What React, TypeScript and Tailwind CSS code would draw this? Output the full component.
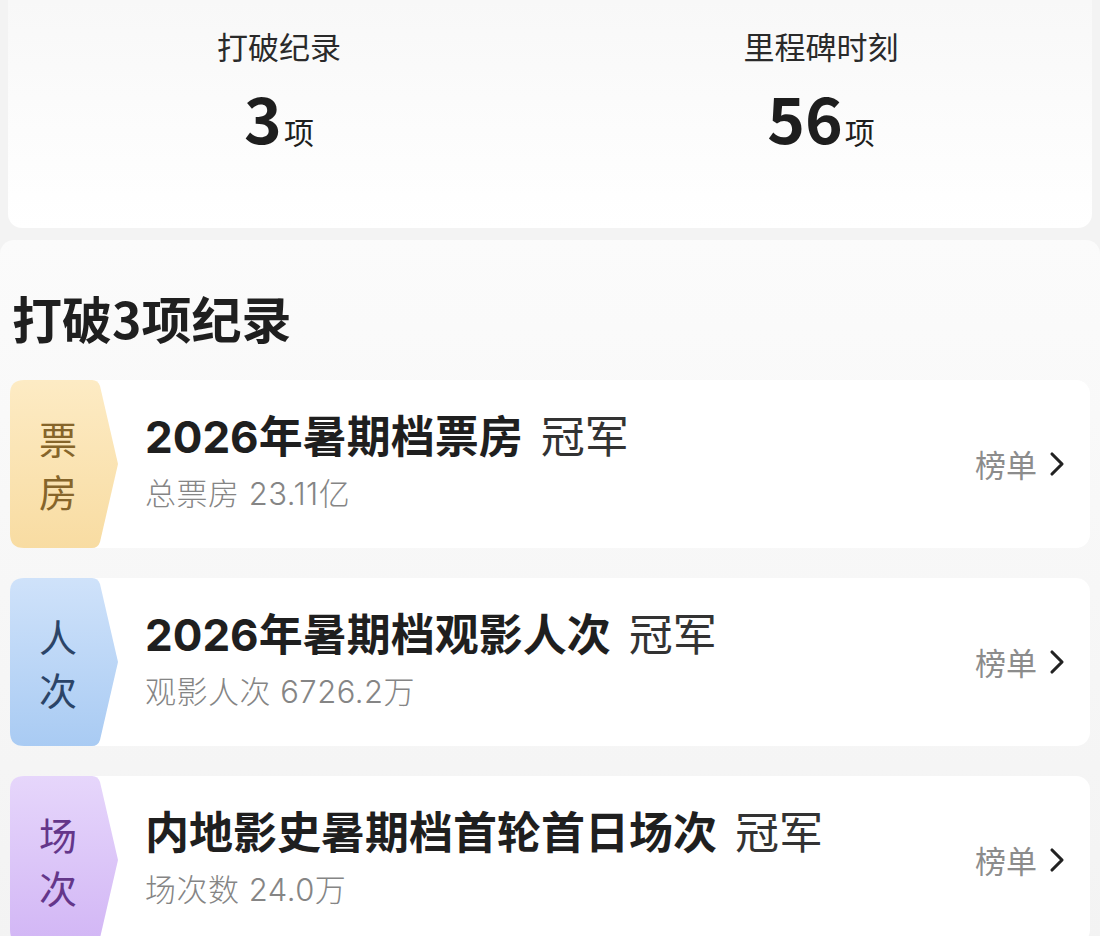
import { ChevronRight } from 'lucide-react';

interface RecordItem {
  badge: [string, string];
  title: string;
  value: string;
  from: string;
  to: string;
  ink: string;
  id: string;
}

const records: RecordItem[] = [
  {
    badge: ['票', '房'],
    title: '2026年暑期档票房',
    value: '总票房 23.11亿',
    from: '#fdebc4',
    to: '#f8dca2',
    ink: 'text-[#86652a]',
    id: 'g-box',
  },
  {
    badge: ['人', '次'],
    title: '2026年暑期档观影人次',
    value: '观影人次 6726.2万',
    from: '#cfe2fa',
    to: '#a9cbf3',
    ink: 'text-[#2b4467]',
    id: 'g-people',
  },
  {
    badge: ['场', '次'],
    title: '内地影史暑期档首轮首日场次',
    value: '场次数 24.0万',
    from: '#e6d6fb',
    to: '#d2b6f5',
    ink: 'text-[#64368a]',
    id: 'g-show',
  },
];

// latin glyphs from Inter (wider digits), CJK falls through
const mixed = { fontFamily: 'Inter, "Noto Sans CJK SC", sans-serif' };

function Badge({ item }: { item: RecordItem }) {
  return (
    <div className="relative w-[108px] shrink-0 self-stretch">
      {/* pentagon tab */}
      <svg className="absolute inset-0 h-full w-full" viewBox="0 0 108 168" preserveAspectRatio="none">
        <defs>
          <linearGradient id={item.id} x1="0" y1="0" x2="0" y2="1">
            <stop offset="0" stopColor={item.from} />
            <stop offset="1" stopColor={item.to} />
          </linearGradient>
        </defs>
        <path
          d="M14 0 H82 Q88 0 90 6 L108 84 L90 162 Q88 168 82 168 H14 Q0 168 0 154 V14 Q0 0 14 0 Z"
          fill={`url(#${item.id})`}
        />
      </svg>
      <div className={`relative flex h-full flex-col items-center justify-center pr-[12px] text-[38px] leading-[53px] ${item.ink}`}>
        <span>{item.badge[0]}</span>
        <span>{item.badge[1]}</span>
      </div>
    </div>
  );
}

function RecordRow({ item }: { item: RecordItem }) {
  return (
    <div className="flex h-[168px] items-center rounded-[14px] bg-white">
      <Badge item={item} />
      <div className="flex flex-1 flex-col pb-[4px] pl-[27px]" style={mixed}>
        <div className="flex items-baseline text-[44px] leading-[56px] text-[#1f1f1f]">
          <span className="font-bold">{item.title}</span>
          <span className="ml-[18px] font-normal text-[#333]">冠军</span>
        </div>
        <div className="mt-[8px] text-[31px] font-light leading-[42px] tracking-[0.5px] text-[#858585]">{item.value}</div>
      </div>
      <div className="flex items-center pr-[13px] text-[31px] text-[#8c8c8c]">
        <span>榜单</span>
        <ChevronRight className="h-[40px] w-[40px] text-[#222]" strokeWidth={1.9} />
      </div>
    </div>
  );
}

export default function App() {
  return (
    <div
      className="h-[936px] w-[1100px] overflow-hidden bg-[#f3f3f3]"
      style={{ fontFamily: '"Noto Sans CJK SC", "Noto Sans", sans-serif' }}
    >
      {/* Summary */}
      <div className="mx-[8px] grid h-[228px] grid-cols-2 rounded-b-[14px] bg-gradient-to-b from-[#f8f8f8] to-white">
        <div className="flex flex-col items-center pt-[24px]">
          <div className="text-[31px] leading-[44px] text-[#2a2a2a]">打破纪录</div>
          <div className="mt-[16px] flex items-baseline text-[#1e1e1e]">
            <span className="text-[64px] font-semibold leading-[64px]">3</span>
            <span className="ml-[2px] text-[30px]">项</span>
          </div>
        </div>
        <div className="flex flex-col items-center pt-[24px]">
          <div className="text-[31px] leading-[44px] text-[#2a2a2a]">里程碑时刻</div>
          <div className="mt-[16px] flex items-baseline text-[#1e1e1e]">
            <span className="text-[64px] font-semibold leading-[64px]">56</span>
            <span className="ml-[2px] text-[30px]">项</span>
          </div>
        </div>
      </div>

      {/* Records */}
      <div className="mt-[12px] rounded-t-[14px] bg-gradient-to-b from-[#fbfbfb] via-[#f7f7f7] to-[#f3f3f3] px-[10px] pt-[46px]">
        <h2 className="pl-[2px] text-[50px] font-bold leading-[62px] text-[#1f1f1f]">打破3项纪录</h2>
        <div className="mt-[32px] flex flex-col gap-[30px]">
          {records.map((item) => (
            <RecordRow key={item.id} item={item} />
          ))}
        </div>
      </div>
    </div>
  );
}
